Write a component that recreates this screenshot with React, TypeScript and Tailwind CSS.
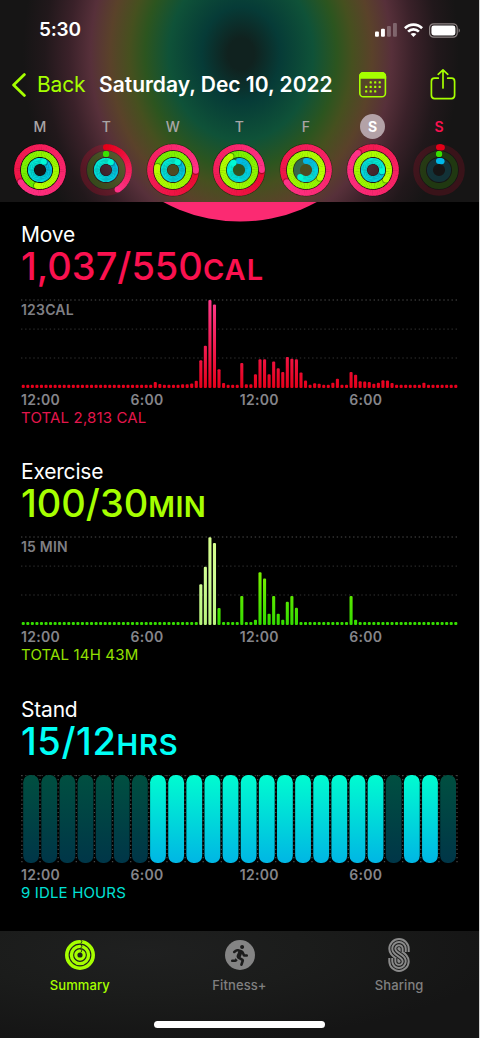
import type { ReactNode } from "react";
import { FaRunning } from "react-icons/fa";

type RGB = [number, number, number];

const MOVE: [RGB, RGB] = [[228, 0, 24], [255, 50, 135]];
const EXERCISE: [RGB, RGB] = [[56, 226, 0], [184, 255, 0]];
const STAND: [RGB, RGB] = [[0, 184, 232], [0, 248, 212]];

const mix = ([a, b]: [RGB, RGB], t: number) =>
  `rgb(${a.map((v, i) => Math.round(v + (b[i] - v) * t)).join(",")})`;

const point = (r: number, turn: number): [number, number] => {
  const a = turn * Math.PI * 2;
  return [27 + r * Math.sin(a), 27 - r * Math.cos(a)];
};

function Ring({ r, value, colors, dim }: { r: number; value: number; colors: [RGB, RGB]; dim?: boolean }) {
  const from = Math.max(0, value - 1);
  const count = Math.max(2, Math.round((value - from) * 60));
  const step = (value - from) / count;
  const end = point(r, value);
  const ahead = point(r, value + 0.2 / r);
  const start = point(r, 0);
  return (
    <g>
      <circle cx="27" cy="27" r={r} fill="none" stroke={mix(colors, 0.2)} strokeOpacity={dim ? 0.17 : 0.22} strokeWidth="6" />
      {value >= 1 && <circle cx="27" cy="27" r={r} fill="none" stroke="#000" strokeOpacity="0.35" strokeWidth="7.4" />}
      {value < 1 && <circle cx={start[0]} cy={start[1]} r="3" fill={mix(colors, 0)} />}
      {Array.from({ length: count }, (_, i) => {
        const a = point(r, from + i * step);
        const b = point(r, from + (i + 1) * step + (i < count - 1 ? 0.003 : 0));
        return (
          <path
            key={i}
            d={`M${a[0]} ${a[1]}A${r} ${r} 0 0 1 ${b[0]} ${b[1]}`}
            fill="none"
            stroke={mix(colors, value < 0.1 ? 0 : (from + (i + 0.5) * step) / value)}
            strokeWidth="6"
          />
        );
      })}
      {value > 1 && <circle cx={ahead[0]} cy={ahead[1]} r="3" fill="#000" fillOpacity="0.28" />}
      <circle cx={end[0]} cy={end[1]} r="3" fill={mix(colors, value < 0.1 ? 0 : 1)} />
    </g>
  );
}

type Day = { name: string; rings: [number, number, number]; state?: "selected" | "today" };

const days: Day[] = [
  { name: "M", rings: [1.66, 1.53, 1.07] },
  { name: "T", rings: [0.415, 0.002, 1.09] },
  { name: "W", rings: [1.255, 1.78, 1.09] },
  { name: "T", rings: [1.25, 1.91, 0.9] },
  { name: "F", rings: [1.66, 3.33, 0.61] },
  { name: "S", rings: [1.885, 3.35, 1.27], state: "selected" },
  { name: "S", rings: [0.02, 0.002, 0.045], state: "today" },
];

function DayColumn({ day }: { day: Day }) {
  const tone =
    day.state === "selected"
      ? "bg-[#b3a2a7] text-white font-bold"
      : day.state === "today"
        ? "text-[#fa114f] font-semibold"
        : "text-[#a9a5a6] font-medium";
  return (
    <div className="flex w-[66.55px] flex-col items-center">
      <div className={`flex size-[25px] items-center justify-center rounded-full text-sm leading-none ${tone}`}>
        {day.name}
      </div>
      <svg className="mt-1 size-[54px]" viewBox="0 0 54 54">
        <Ring r={22.8} value={day.rings[0]} colors={MOVE} dim={day.state === "today"} />
        <Ring r={16} value={day.rings[1]} colors={EXERCISE} dim={day.state === "today"} />
        <Ring r={9.1} value={day.rings[2]} colors={STAND} dim={day.state === "today"} />
      </svg>
    </div>
  );
}

function StatusBar() {
  return (
    <div className="flex h-5 items-center justify-between pr-[18px] pl-[39px]">
      <span className="text-[19px] leading-5 font-semibold tracking-[-0.2px] text-white">5:30</span>
      <div className="flex h-5 items-center gap-[6.5px]">
        <svg className="h-[14px] w-[22px]" viewBox="0 0 22 14" fill="#fff">
          <rect x="0" y="8.5" width="3.9" height="5.2" rx="1" />
          <rect x="6" y="5.8" width="3.9" height="7.9" rx="1" />
          <rect x="12" y="3" width="3.9" height="10.7" rx="1" opacity="0.27" />
          <rect x="18" y="0" width="3.9" height="13.7" rx="1" opacity="0.27" />
        </svg>
        <svg className="h-[14px] w-[19px]" viewBox="0 0 19 14" fill="none" stroke="#fff" strokeWidth="2.7">
          <path d="M0.9 5.2C5.8 0.3 13.2 0.3 18.1 5.2" />
          <path d="M4.1 8.6C7.2 5.6 11.8 5.6 14.9 8.6" />
          <path d="M6.6 11C8.3 9.5 10.7 9.5 12.4 11L9.5 13.9Z" fill="#fff" stroke="none" />
        </svg>
        <svg className="h-[15px] w-8" viewBox="0 0 32 15">
          <rect x="0.6" y="0.8" width="27.6" height="13.4" rx="4" fill="none" stroke="#8e8585" strokeWidth="1.2" />
          <rect x="2.4" y="2.5" width="24" height="10" rx="2.4" fill="#fff" />
          <path d="M29.6 5.3C31.3 6 31.3 9 29.6 9.7Z" fill="#8e8585" />
        </svg>
      </div>
    </div>
  );
}

function NavBar() {
  return (
    <div className="mt-[29px] flex h-8 items-center">
      <svg className="ml-[11px] h-6 w-4" viewBox="0 0 16 24" fill="none" stroke="#a6ff00" strokeWidth="2.8" strokeLinecap="round" strokeLinejoin="round">
        <path d="M13.4 1.6L2.6 12L13.4 22.4" />
      </svg>
      <span className="ml-[10px] w-[62px] text-[21px] leading-8 tracking-[-0.2px] text-[#a6ff00]">Back</span>
      <h1 className="w-[260px] text-[21px] leading-8 font-semibold whitespace-nowrap text-white">
        Saturday, Dec 10, 2022
      </h1>
      <svg className="h-[26px] w-7 shrink-0" viewBox="0 0 28 26" fill="#a6ff00">
        <rect x="0.8" y="0.9" width="25.6" height="23.9" rx="3.6" fill="none" stroke="#a6ff00" strokeWidth="1.6" />
        <path d="M0 4.5C0 1.5 1.5 0 4.5 0H22.7C25.7 0 27.2 1.5 27.2 4.5V6.8H0Z" />
        {[10.6, 15.1, 19.6].map((x) => <rect key={x} x={x} y="9.3" width="2.2" height="2.2" rx="0.6" />)}
        {[6.1, 10.6, 15.1, 19.6].map((x) => <rect key={x} x={x} y="13.8" width="2.2" height="2.2" rx="0.6" />)}
        {[6.1, 10.6, 15.1].map((x) => <rect key={x} x={x} y="18.3" width="2.2" height="2.2" rx="0.6" />)}
      </svg>
      <svg className="ml-[43px] h-8 w-[26px] shrink-0" viewBox="0 0 26 32" fill="none" stroke="#a6ff00" strokeWidth="1.7" strokeLinecap="round" strokeLinejoin="round">
        <path d="M8.3 9.2H4.6Q1.4 9.2 1.4 12.4V26.3Q1.4 29.6 4.6 29.6H21.4Q24.6 29.6 24.6 26.3V12.4Q24.6 9.2 21.4 9.2H17.7" />
        <path d="M13 19V1M8.2 5.3L13 0.9L17.8 5.3" />
      </svg>
    </div>
  );
}

function Grid({ top }: { top: number[] }) {
  return (
    <>
      {top.map((y, i) => (
        <line key={y} x1="0" x2="436.5" y1={y} y2={y} stroke={i === 0 ? "#4c4c4c" : "#333"} strokeWidth="1" strokeDasharray="1.4 2.7" />
      ))}
    </>
  );
}

const quarterHours = (fallback: number, values: Record<number, number>) =>
  Array.from({ length: 96 }, (_, i) => values[i] ?? fallback);

const moveBars = quarterHours(3.2, {
  29: 6, 30: 4, 35: 3.7, 36: 3.7, 37: 4.5, 38: 7.3, 39: 27.8, 40: 42.3, 41: 88, 42: 83.5, 43: 18.8, 44: 5,
  48: 25, 49: 3.7, 50: 3.7, 51: 13.7, 52: 28.7, 53: 28.7, 54: 13.7, 55: 26.5, 56: 19.7, 57: 16, 58: 31,
  59: 29.3, 60: 28.7, 61: 15.6, 62: 7.4, 64: 4.8, 65: 4.3, 68: 5.3, 69: 9.3, 72: 16, 73: 13.3, 74: 6.8,
  75: 6.4, 76: 6, 77: 4.3, 78: 5.3, 79: 7.8, 80: 7.6, 81: 5, 88: 5.3,
});

const exerciseBars = quarterHours(3, {
  39: 40.7, 40: 58.2, 41: 87.7, 42: 82, 43: 17, 48: 29, 51: 5.3, 52: 52.7, 53: 46.6, 54: 11.3, 55: 29,
  56: 11.3, 57: 5.3, 58: 23.2, 59: 29, 60: 17.2, 72: 29, 73: 5.3,
});

function BarChart({ id, bars, stops, pale, label }: { id: string; bars: number[]; stops: [string, string]; pale?: boolean; label: string }) {
  return (
    <div className="relative h-[90px]">
      <svg className="h-[90px] w-[440px]" viewBox="0 0 440 90">
        <defs>
          <linearGradient id={id} gradientUnits="userSpaceOnUse" x1="0" y1="89" x2="0" y2="1">
            <stop offset="0" stopColor={stops[0]} />
            <stop offset="1" stopColor={stops[1]} />
          </linearGradient>
          <linearGradient id={`${id}-pale`} gradientUnits="userSpaceOnUse" x1="0" y1="89" x2="0" y2="1">
            <stop offset="0" stopColor="#b9f47e" />
            <stop offset="0.5" stopColor="#cdfb92" />
            <stop offset="1" stopColor="#d6ff8c" />
          </linearGradient>
        </defs>
        <Grid top={[1, 30.1, 59]} />
        {bars.map((h, i) => (
          <rect
            key={i}
            x={0.7 + i * 4.553}
            y={89 - h}
            width="3.1"
            height={h}
            rx="1.1"
            fill={pale && i >= 39 && i <= 42 ? `url(#${id}-pale)` : `url(#${id})`}
          />
        ))}
      </svg>
      <span className="absolute top-[4px] left-0 text-sm leading-[14px] font-semibold tracking-[0.2px] text-[#7f7f84]">{label}</span>
    </div>
  );
}

const idle = new Set([0, 1, 2, 3, 4, 5, 6, 20, 23]);

function StandChart() {
  const hours = Array.from({ length: 24 }, (_, i) => i);
  return (
    <svg className="h-[90px] w-[440px]" viewBox="0 0 440 90">
      <defs>
        <linearGradient id="stand-on" x1="0" y1="0" x2="0" y2="1">
          <stop offset="0" stopColor="#00fcd0" />
          <stop offset="1" stopColor="#00b6e4" />
        </linearGradient>
        <linearGradient id="stand-off" x1="0" y1="0" x2="0" y2="1">
          <stop offset="0" stopColor="#004f40" />
          <stop offset="1" stopColor="#003648" />
        </linearGradient>
      </defs>
      <line x1="0" x2="436.5" y1="1.5" y2="1.5" stroke="#333" strokeWidth="1" strokeDasharray="1.4 2.7" />
      {[...hours, 24].map((i) => (
        <line key={i} x1={0.9 + i * 18.13} x2={0.9 + i * 18.13} y1="1" y2="89" stroke="#484848" strokeWidth="1.3" strokeDasharray="1.2 2.9" />
      ))}
      {hours.map((i) => (
        <rect key={i} x={2.2 + i * 18.13} y="1" width="15.8" height="88" rx="7.2" fill={idle.has(i) ? "url(#stand-off)" : "url(#stand-on)"} />
      ))}
    </svg>
  );
}

function Section({ title, value, unit, tone, valueClass, unitClass, totalTone, total, children }: {
  title: string; value: string; unit: string; tone: string; valueClass: string; unitClass: string; totalTone: string; total: string; children: ReactNode;
}) {
  return (
    <section className="h-[237.7px] pl-[21px]">
      <h2 className="h-7 text-[21px] leading-7 tracking-[-0.2px] text-white">{title}</h2>
      <p className={`h-[34px] text-[38px] leading-[34px] font-medium whitespace-nowrap ${tone} ${valueClass}`}>
        {value}
        <span className={`text-[29px] leading-none font-semibold ${unitClass}`}>{unit}</span>
      </p>
      <div className="mt-4">{children}</div>
      <div className="grid h-[22px] w-[437.6px] grid-cols-4 text-sm leading-[22px] font-semibold tracking-[0.3px] text-[#85858a]">
        <span>12:00</span>
        <span>6:00</span>
        <span>12:00</span>
        <span>6:00</span>
      </div>
      <p className={`h-[14px] text-[15px] leading-[14px] tracking-[0.15px] ${totalTone}`}>{total}</p>
    </section>
  );
}

function SummaryIcon() {
  return (
    <svg className="size-[34px]" viewBox="0 0 34 34" fill="none">
      <g stroke="#a6ff00">
        <circle cx="17" cy="17" r="13.2" strokeWidth="3.6" />
        <circle cx="17" cy="17" r="8.6" strokeWidth="3.4" />
        <circle cx="17" cy="17" r="4.2" strokeWidth="3.2" />
      </g>
      <g stroke="#1c1d1c" strokeWidth="0.9">
        <path d="M17.8 1.8Q20 3.6 17.8 5.5" />
        <path d="M17.8 6.5Q20 8.3 17.8 10.1" />
        <path d="M17.8 11.1Q19.8 12.8 17.8 14.5" />
      </g>
    </svg>
  );
}

function FitnessIcon() {
  return (
    <div className="flex size-[34px] items-center justify-center">
      <div className="flex size-[30px] items-center justify-center rounded-full bg-[#848484]">
        <FaRunning className="size-[21px] text-[#1c1c1c]" />
      </div>
    </div>
  );
}

function SharingIcon() {
  const d = "M16.2 14V10.8A5.2 5.2 0 0 0 5.8 10.8C5.8 16.8 16.2 17.2 16.2 23.2A5.2 5.2 0 0 1 5.8 23.2V20";
  return (
    <svg className="h-[34px] w-[22px]" viewBox="0 0 22 34" fill="none">
      <path d={d} stroke="#8a8a8a" strokeWidth="11" />
      <path d={d} stroke="#191919" strokeWidth="7" />
      <path d={d} stroke="#8a8a8a" strokeWidth="5.1" />
      <path d={d} stroke="#191919" strokeWidth="1.1" />
    </svg>
  );
}

function Tab({ icon, label, active }: { icon: ReactNode; label: string; active?: boolean }) {
  return (
    <div className={`flex flex-1 flex-col items-center pt-[7px] ${active ? "text-[#a6ff00]" : "text-[#808080]"}`}>
      {icon}
      <span className="mt-[5px] text-[13px] leading-4 font-medium tracking-[0.1px]">{label}</span>
    </div>
  );
}

export default function App() {
  return (
    <div className="h-[1038px] w-[480px] overflow-hidden border-r border-[#d4d4d4] bg-black font-['Inter','Liberation_Sans',sans-serif]">
      <header className="h-[202px] bg-[#161515] bg-[radial-gradient(218px_262px_at_241px_54px,#10221f_0%,#10221f_6%,#063b37_18%,#0f5238_33%,#2c551f_44%,#46501f_51%,#5a422a_60%,#57303a_69%,#3a2129_79%,#21181b_90%,#161515_100%)] pt-5">
        <StatusBar />
        <NavBar />
        <div className="mt-[13px] flex pl-[6.5px]">
          {days.map((day, i) => (
            <DayColumn key={i} day={day} />
          ))}
        </div>
      </header>

      <main className="h-[729px] overflow-hidden">
        <svg className="h-[19px] w-[479px]" viewBox="0 0 479 19" overflow="visible">
          <defs>
            <clipPath id="below-header">
              <rect x="0" y="0" width="479" height="24" />
            </clipPath>
          </defs>
          <circle cx="240" cy="-140.6" r="160.2" fill="#fb2a72" clipPath="url(#below-header)" />
        </svg>
        <div className="-mt-[0.3px] flex flex-col">
          <Section title="Move" value="1,037/550" unit="CAL" tone="text-[#fa114f]" valueClass="" unitClass="tracking-[1px]" totalTone="text-[#e3164c]" total="TOTAL 2,813 CAL">
            <BarChart id="move" bars={moveBars} stops={["#e5001a", "#ff3a8c"]} label="123CAL" />
          </Section>
          <Section title="Exercise" value="100/30" unit="MIN" tone="text-[#a6ff00]" valueClass="" unitClass="tracking-[0.4px]" totalTone="text-[#93e000]" total="TOTAL 14H 43M">
            <BarChart id="exercise" bars={exerciseBars} stops={["#34dc00", "#a8ff00"]} pale label="15 MIN" />
          </Section>
          <Section title="Stand" value="15/12" unit="HRS" tone="text-[#00fff6]" valueClass="tracking-[0.6px]" unitClass="tracking-[0.9px]" totalTone="text-[#00e0d6]" total="9 IDLE HOURS">
            <StandChart />
          </Section>
        </div>
      </main>

      <footer className="flex h-[107px] flex-col bg-[#171717] bg-[radial-gradient(ellipse_at_30%_20%,#1f2020_0%,#1b1c1b_35%,#151515_75%)]">
        <nav className="flex">
          <Tab icon={<SummaryIcon />} label="Summary" active />
          <Tab icon={<FitnessIcon />} label="Fitness+" />
          <Tab icon={<SharingIcon />} label="Sharing" />
        </nav>
        <div className="mx-auto mt-[28px] h-[7px] w-[171px] rounded-full bg-white" />
      </footer>
    </div>
  );
}
